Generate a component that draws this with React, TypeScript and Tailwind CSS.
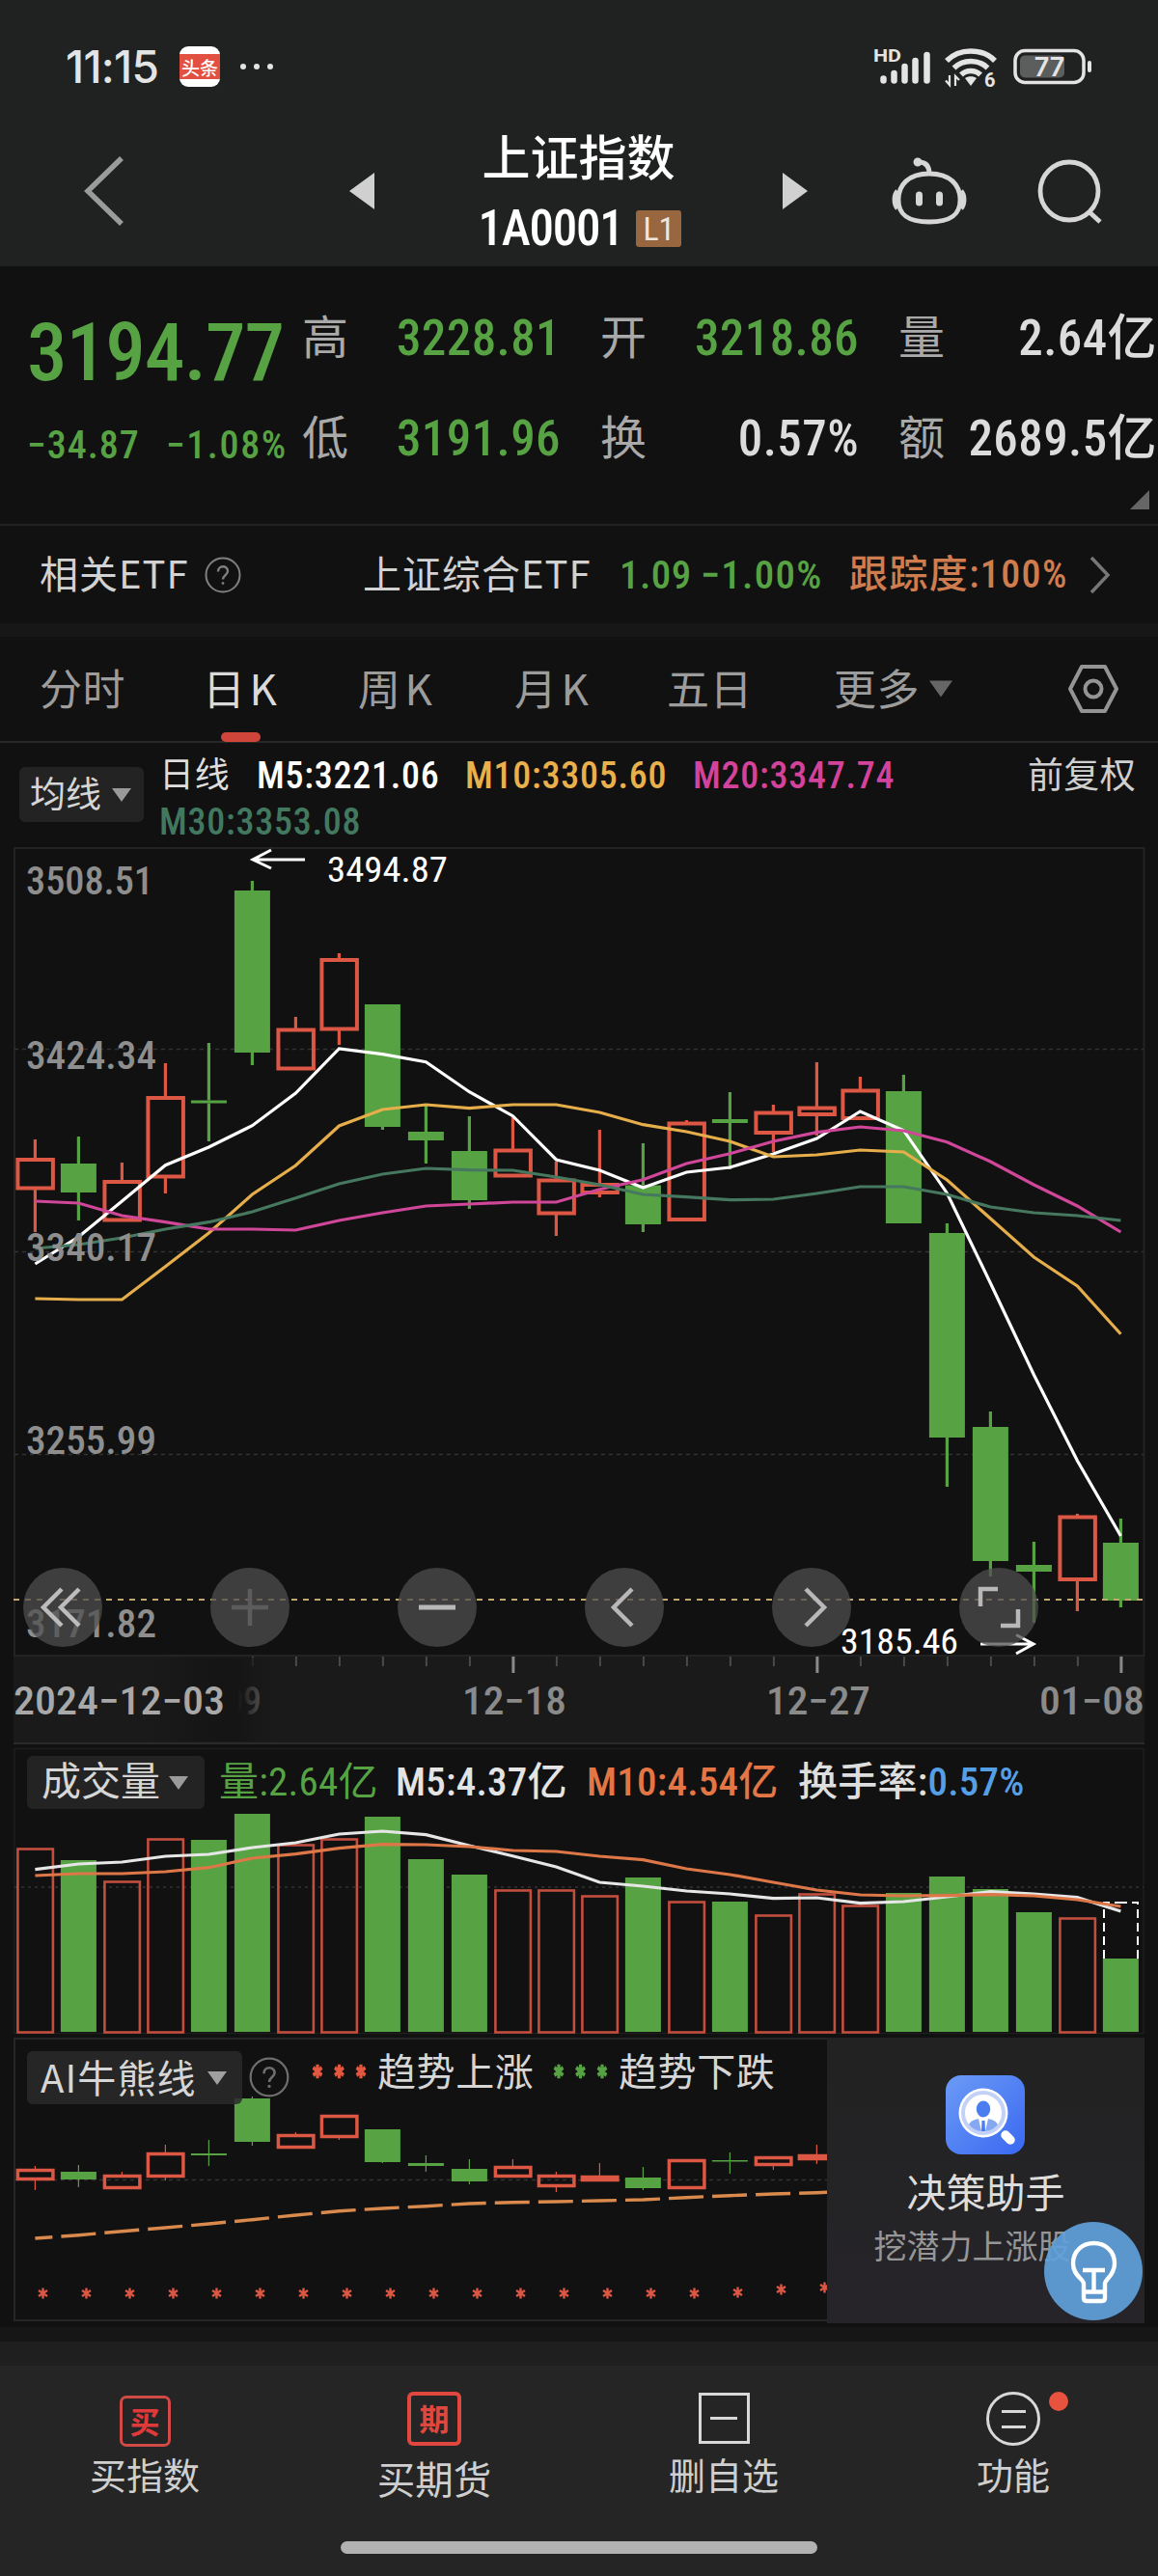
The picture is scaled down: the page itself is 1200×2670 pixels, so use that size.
import type { ReactNode } from "react";

type Candle = [up: 0 | 1, high: number, top: number, bottom: number, low: number];

const STEP = 45;
const FIRST = 36.4;
const cx = (i: number) => FIRST + i * STEP;
const linePoints = (ys: number[]) => ys.map((y, i) => `${cx(i)},${y}`).join(" ");

const candles: Candle[] = [
    [1, 1181, 1202, 1231.5, 1277],
    [0, 1178, 1206, 1236, 1265],
    [1, 1205, 1225, 1264.5, 1264.5],
    [1, 1102, 1138, 1219.5, 1237],
    [0, 1081, 1140.5, 1143.5, 1183],
    [0, 913, 923, 1091, 1104],
    [1, 1054, 1067.5, 1107.5, 1107.5],
    [1, 988, 995, 1066.5, 1083],
    [0, 1041, 1041, 1168, 1171],
    [0, 1144, 1173, 1182, 1206],
    [0, 1157, 1193, 1244, 1253],
    [1, 1157, 1192.5, 1218.5, 1218.5],
    [1, 1204, 1223.5, 1257.5, 1281],
    [1, 1171, 1228, 1236, 1241],
    [0, 1185, 1228.5, 1269, 1277],
    [1, 1161, 1164.5, 1264, 1264],
    [0, 1132, 1160, 1164, 1212],
    [1, 1145, 1153.5, 1174, 1194],
    [1, 1101, 1148.5, 1155, 1177],
    [1, 1116, 1130.5, 1159, 1159],
    [0, 1114, 1131, 1268, 1268],
    [0, 1268, 1278, 1490, 1541],
    [0, 1463, 1479, 1618, 1634],
    [0, 1598, 1622, 1629, 1682],
    [1, 1569, 1572.5, 1637, 1670],
    [0, 1574, 1599, 1659, 1666],
];

const ma5 = [1310, 1282, 1245, 1207.7, 1189, 1166.7, 1133, 1087, 1092.7, 1100.7, 1131.7, 1156.7, 1202, 1213, 1231, 1215, 1210, 1196, 1180, 1152, 1171.7, 1236.7, 1330, 1425, 1514, 1592];
const ma10 = [1346, 1347, 1347, 1312.7, 1278, 1238, 1208, 1167, 1150, 1145, 1148.7, 1145, 1145, 1153, 1165.7, 1173, 1183, 1199, 1197, 1192, 1194, 1223, 1263, 1303, 1333, 1382.7];
const ma20 = [1245, 1247, 1260, 1266.7, 1274, 1274, 1275, 1265, 1257, 1250, 1248, 1246, 1246, 1232.7, 1222.7, 1206, 1195.7, 1183, 1173.7, 1168, 1172, 1183.7, 1204, 1228, 1250, 1277];
const ma30 = [1294, 1290, 1283, 1274, 1266.7, 1256, 1241.7, 1227, 1217, 1211, 1212.7, 1213, 1220, 1228, 1238, 1240.7, 1243.7, 1243, 1237, 1230, 1230, 1238, 1251, 1257, 1260, 1265];

const volumeTops = [1915, 1928, 1949, 1905, 1907, 1880, 1911, 1905, 1883, 1927, 1943, 1958, 1958, 1964, 1946, 1970, 1971, 1984, 1962, 1974, 1962, 1945, 1958, 1982, 1987, 2030];
const volumeMa5 = [1937.7, 1932, 1930, 1924, 1922, 1915, 1910, 1901, 1898, 1901.7, 1913, 1923.7, 1935, 1951, 1955, 1960, 1963, 1967.7, 1967, 1972.7, 1971, 1966, 1960.7, 1963, 1966.7, 1981];
const volumeMa10 = [1944, 1942, 1942, 1940, 1935.7, 1926, 1921.7, 1915.7, 1911.7, 1912, 1914, 1918, 1919, 1924, 1927.7, 1937, 1943, 1951, 1959, 1964, 1965, 1964.7, 1963.7, 1965, 1969, 1976];

const aiCandles: Candle[] = [
    [1, 2245, 2249.5, 2258.5, 2270],
    [0, 2244, 2251, 2259, 2267],
    [1, 2251, 2255.5, 2267.5, 2267.5],
    [1, 2223, 2232.5, 2255.5, 2260],
    [0, 2218, 2232, 2234, 2245],
    [0, 2173, 2175, 2220, 2224],
    [1, 2210, 2213.5, 2225.5, 2225.5],
    [1, 2192, 2193.5, 2214.5, 2218],
    [0, 2207, 2207, 2241, 2242],
    [0, 2234, 2242, 2245, 2251],
    [0, 2238, 2248, 2261, 2264],
    [1, 2238, 2246.5, 2255.5, 2255.5],
    [1, 2251, 2255.5, 2265.5, 2272],
    [1, 2242, 2256.5, 2259.5, 2259.5],
    [0, 2246, 2257, 2268, 2270],
    [1, 2238, 2239.5, 2267.5, 2267.5],
    [0, 2231, 2239, 2240.5, 2253],
    [1, 2235, 2236.5, 2243.5, 2249],
    [1, 2223, 2234.5, 2237.5, 2243],
];
const aiTrend = [2320, 2316.7, 2312.7, 2309, 2305, 2300.7, 2296, 2291.7, 2289, 2286.7, 2284, 2282.7, 2282, 2281, 2280, 2277.7, 2275.7, 2274, 2272.7, 2271];
const aiStars = [...Array(16).fill(2377), 2376, 2373, 2371];

const NUM = "font-['Roboto_Condensed','Roboto','Noto_Sans_CJK_SC',sans-serif] font-stretch-condensed whitespace-nowrap";

function Candles({ data, wick, stroke }: { data: Candle[]; wick: number; stroke: number }) {
    return (
        <>
            {data.map(([up, high, top, bottom, low], i) => {
                const x = cx(i);
                const color = up ? "#dc5744" : "#57a344";
                return (
                    <g key={i}>
                        <path d={`M${x} ${high}V${top}M${x} ${bottom}V${low}`} stroke={color} strokeWidth={wick} />
                        {up ? (
                            <rect x={x - 18} y={top} width={36.5} height={bottom - top} fill="none" stroke={color} strokeWidth={stroke} />
                        ) : (
                            <rect x={x - 18.5} y={top} width={37} height={bottom - top} fill={color} />
                        )}
                    </g>
                );
            })}
        </>
    );
}

function Label({ x, y, w, size = 40, fill = "#8e8e8e", weight = 500, children }: {
    x: number; y: number; w: number; size?: number; fill?: string; weight?: number; children: string;
}) {
    return (
        <text x={x} y={y} textLength={w} lengthAdjust="spacingAndGlyphs" fontSize={size} fill={fill} fontWeight={weight} className={NUM}>
            {children}
        </text>
    );
}

function Caret({ className = "" }: { className?: string }) {
    return (
        <svg viewBox="0 0 20 14" className={"w-5 h-3.5 " + className}>
            <path d="M0 0H20L10 14Z" fill="currentColor" />
        </svg>
    );
}

function HelpIcon({ className }: { className: string }) {
    return (
        <svg viewBox="0 0 38 38" className={className} fill="none" stroke="currentColor" strokeWidth="2">
            <circle cx="19" cy="19" r="17.5" />
            <path d="M14 15.5c0-7 10-7 10-.5 0 4-5 4.200-5 8.500" strokeWidth="2.400" />
            <circle cx="19" cy="27.500" r="1" fill="currentColor" strokeWidth="1" />
        </svg>
    );
}

function StatusBar() {
    return (
        <div className="flex h-[138px] items-center pl-[68px] pr-[66px] text-[#e4e4e4]">
            <span className="w-[96px] text-[46px] font-medium tracking-[-0.015em] whitespace-nowrap font-['Inter',sans-serif]">11:15</span>
            <div className="ml-[22px] flex h-[42px] w-[42px] items-center justify-center overflow-hidden rounded-[9px] bg-white">
                <div className="flex h-[26px] w-full items-center justify-center bg-[#e25042] text-[19px] leading-none font-medium text-white">头条</div>
            </div>
            <div className="ml-[21px] flex gap-[8px]">
                <i className="h-1.5 w-1.5 rounded-full bg-current" />
                <i className="h-1.5 w-1.5 rounded-full bg-current" />
                <i className="h-1.5 w-1.5 rounded-full bg-current" />
            </div>
            <svg viewBox="904 44 230 50" className="ml-auto h-[50px] w-[230px]" fill="currentColor">
                <text x="905" y="64" fontSize="19" fontWeight="700" textLength="29" lengthAdjust="spacingAndGlyphs" className="font-['Roboto',sans-serif]">HD</text>
                <g stroke="currentColor" strokeWidth="6.500" strokeLinecap="round">
                    <path d="M915.500 81.500V83.500M926.500 76V83.500M937.500 69V83.500M948.500 63V83.500M960.500 57V83.500" />
                </g>
                <g fill="none" stroke="currentColor" strokeWidth="5.500">
                    <path d="M981 63C994 49.500 1018 49.500 1031 63" />
                    <path d="M988.500 70.500C998 61 1014 61 1023.500 70.500" />
                    <path d="M996 77.500C1001.500 72 1010.500 72 1016 77.500" />
                </g>
                <path d="M1000 81C1003 78.500 1009 78.500 1012 81L1006 89Z" />
                <path d="M984 78V88L980 83.500M990 89V79L994 83" fill="none" stroke="currentColor" strokeWidth="2.200" />
                <text x="1020" y="90" fontSize="20" fontWeight="700" className="font-['Roboto',sans-serif]">6</text>
                <rect x="1052" y="52.500" width="71" height="33" rx="10" fill="none" stroke="currentColor" strokeWidth="3.500" />
                <rect x="1057" y="57.500" width="46" height="23" rx="5" fill="#5c5d5d" />
                <rect x="1127" y="63" width="4" height="12" rx="2" />
                <text x="1087.500" y="78.500" fontSize="27" fontWeight="600" textAnchor="middle" className="font-['Inter',sans-serif]">77</text>
            </svg>
        </div>
    );
}

function NavBar() {
    return (
        <div className="flex h-[138px] items-center pb-[18px]">
            <svg viewBox="0 0 46 76" className="ml-[85px] h-[76px] w-[46px]" fill="none" stroke="#9b9b9b" strokeWidth="5.500">
                <path d="M41 4L6 38L41 72" />
            </svg>
            <svg viewBox="0 0 26 38" className="ml-[231px] h-[38px] w-[26px]" fill="#d0d0d0">
                <path d="M26 0V38L0 19Z" />
            </svg>
            <div className="flex w-[423px] flex-col items-center text-white">
                <div className="h-[62px] text-[50px] leading-[60px] font-medium">上证指数</div>
                <div className="mt-[15px] flex h-[60px] items-center gap-[14px] pl-[3px]">
                    <span className={NUM + " text-[51px] leading-none font-medium tracking-[-0.025em]"}>1A0001</span>
                    <span className={NUM + " flex h-[38px] w-[47px] items-center justify-center rounded-[3px] bg-[#98663f] text-[34px] leading-none text-[#efe6dc]"}>L1</span>
                </div>
            </div>
            <svg viewBox="0 0 26 38" className="h-[38px] w-[26px]" fill="#d0d0d0">
                <path d="M0 0V38L26 19Z" />
            </svg>
            <svg viewBox="922 158 82 76" className="ml-[85px] h-[76px] w-[82px]" fill="none" stroke="#d6d6d6" strokeWidth="4.800">
                <path d="M963 178C985 178 995 190 995 205C995 221 985 228 963 228C941 228 931 221 931 205C931 190 941 178 963 178Z" />
                <path d="M930 196C926 200 926 210 930 214M996 196C1000 200 1000 210 996 214" />
                <path d="M963 178C963 170 959 166 952 166" />
                <circle cx="951" cy="166" r="3.500" fill="#d6d6d6" strokeWidth="2" />
                <path d="M952.500 200V208M973.500 200V208" strokeWidth="7" strokeLinecap="round" />
            </svg>
            <svg viewBox="1072 160 74 74" className="ml-[68px] h-[74px] w-[74px]" fill="none" stroke="#d6d6d6" strokeWidth="4.800">
                <circle cx="1108" cy="197" r="30" />
                <path d="M1128 218L1140 229" />
            </svg>
        </div>
    );
}

function QuoteCell({ label, value, className = "" }: { label: string; value: string; className?: string }) {
    return (
        <div className="flex items-center justify-between">
            <span className="pb-[5px] text-[48px] leading-none text-[#a9a9a9]">{label}</span>
            <span className={NUM + " pt-[4px] text-[51px] leading-none font-medium tracking-[0.008em] " + className}>{value}</span>
        </div>
    );
}

function Quote() {
    return (
        <div className="relative flex h-[267px] bg-[#111111] pt-[20px]">
            <div className="w-[313px] shrink-0 pl-[28px] text-[#57a344]">
                <div className={NUM + " mt-[28px] h-[83px] text-[83px] leading-[83px] font-medium tracking-[-0.01em]"}>3194.77</div>
                <div className={NUM + " mt-[35px] flex text-[40px] leading-none font-medium tracking-[0.025em]"}>
                    <span className="w-[144px]">−34.87</span>
                    <span className="tracking-[0.04em]">−1.08%</span>
                </div>
            </div>
            <div className="grid h-[208px] flex-1 grid-cols-[268px_268px_268px] grid-rows-2 gap-x-[41px]">
                <QuoteCell label="高" value="3228.81" className="text-[#57a344]" />
                <QuoteCell label="开" value="3218.86" className="text-[#57a344]" />
                <QuoteCell label="量" value="2.64亿" className="text-[#dcdcdc]" />
                <QuoteCell label="低" value="3191.96" className="text-[#57a344]" />
                <QuoteCell label="换" value="0.57%" className="text-[#dcdcdc]" />
                <QuoteCell label="额" value="2689.5亿" className="text-[#dcdcdc]" />
            </div>
            <svg viewBox="0 0 20 20" className="absolute right-[9px] bottom-[15px] h-5 w-5" fill="#666666">
                <path d="M20 0V20H0Z" />
            </svg>
        </div>
    );
}

function EtfRow() {
    return (
        <div className="flex h-[103px] items-center border-t-2 border-[#222222] bg-[#111111] text-[40px] text-[#d2d2d2]">
            <span className="w-[171px] pb-[6px] pl-[41px] tracking-[0.025em] whitespace-nowrap">相关ETF</span>
            <HelpIcon className="ml-[41px] h-[38px] w-[38px] text-[#808080]" />
            <span className="ml-[126px] w-[266px] pb-[6px] tracking-[0.025em] whitespace-nowrap">上证综合ETF</span>
            <span className={NUM + " w-[84px] pt-[2px] text-[41px] font-medium tracking-[0.01em] text-[#57a344]"}>1.09</span>
            <span className={NUM + " w-[154px] pt-[2px] text-[41px] font-medium tracking-[0.03em] text-[#57a344]"}>−1.00%</span>
            <span className={NUM + " w-[248px] text-[40px] font-medium tracking-[0.035em] text-[#cf7c4e]"}>跟踪度:100%</span>
            <svg viewBox="0 0 24 40" className="h-10 w-6" fill="none" stroke="#777777" strokeWidth="3.500">
                <path d="M3 2L20 20L3 38" />
            </svg>
        </div>
    );
}

function Tabs() {
    return (
        <div className="flex h-[110px] items-center border-b-2 border-[#282828] bg-[#111111] pl-[41px] text-[44px] tracking-[0.01em] text-[#9c9c9c]">
            <span className="w-[169px] pb-[4px]">分时</span>
            <div className="relative flex h-full w-[161px] items-center pb-[4px] tracking-[0.1em] text-[#dadada]">
                日K
                <i className="absolute bottom-[-1px] left-[19px] h-[10px] w-[41px] rounded-full bg-[#d0453a]" />
            </div>
            <span className="w-[162px] pb-[4px] tracking-[0.1em]">周K</span>
            <span className="w-[158px] pb-[4px] tracking-[0.1em]">月K</span>
            <span className="w-[173px] pb-[4px]">五日</span>
            <span className="pb-[4px]">更多</span>
            <Caret className="ml-[10px] h-[20px] w-[24px] text-[#666666]" />
            <svg viewBox="0 0 54 52" className="ml-[119px] h-[52px] w-[54px]" fill="none" stroke="#949494" strokeWidth="4">
                <path d="M15 3H39L51 26L39 49H15L3 26Z" strokeLinejoin="round" />
                <circle cx="27" cy="26" r="8.500" />
            </svg>
        </div>
    );
}

function MaLegend() {
    return (
        <div className="flex h-[104px] bg-[#111111] pl-[20px]">
            <div className="mt-[25px] flex h-[57px] w-[129px] items-center rounded-[6px] bg-[#232323] pl-[11px] text-[37px] text-[#d6d6d6]">
                <span className="pb-[3px]">均线</span>
                <Caret className="ml-[11px] text-[#9a9a9a]" />
            </div>
            <div className={NUM + " ml-[16px] w-[801px] text-[38px] font-medium tracking-[0.02em]"}>
                <div className="mt-[10px] flex h-[48px] items-center">
                    <span className="w-[101px] text-[36px] font-normal text-[#dedede]">日线</span>
                    <span className="w-[216px] text-white">M5:3221.06</span>
                    <span className="w-[236px] text-[#e9b04b]">M10:3305.60</span>
                    <span className="text-[#d4439b]">M20:3347.74</span>
                </div>
                <div className="flex h-[48px] items-center text-[#41785f]">M30:3353.08</div>
            </div>
            <div className="mt-[8px] ml-[99px] flex h-[48px] items-center text-[37px] tracking-[0.01em] whitespace-nowrap text-[#d0d0d0]">前复权</div>
        </div>
    );
}

const controls: [number, string, ReactNode][] = [
    [65, "#bcbcbc", <path d="M40 22L21 41L40 60M58 22L39 41L58 60" />],
    [259, "#5c5c5c", <path d="M41 22V60M22 41H60" />],
    [453, "#b8b8b8", <path d="M22 41H60" strokeWidth="5" />],
    [647, "#b8b8b8", <path d="M49 22L30 41L49 60" />],
    [841, "#b8b8b8", <path d="M35 22L54 41L35 60" />],
    [1035, "#b8b8b8", <path d="M22 40V22H40M61 43V60H43" />],
];

function PriceChart() {
    return (
        <div className="relative h-[934px]">
            <svg viewBox="0 874 1200 934" className="block h-[934px] w-[1200px]">
                <defs>
                    <linearGradient id="fade">
                        <stop offset="0" stopColor="#151515" stopOpacity="0" />
                        <stop offset=".5" stopColor="#151515" />
                        <stop offset=".64" stopColor="#151515" />
                        <stop offset="1" stopColor="#1a1a1a" stopOpacity="0" />
                    </linearGradient>
                </defs>
                <rect x="14" y="1717" width="1172" height="89" fill="#1a1a1a" />
                <rect x="15" y="879" width="1170.500" height="837" fill="none" stroke="#232323" strokeWidth="2" />
                <path d="M15 1087.500H1185M15 1297.500H1185M15 1507.500H1185" stroke="#333333" strokeWidth="1.500" strokeDasharray="4 4" />
                <Candles data={candles} wick={3.200} stroke={4} />
                <g fill="none" strokeWidth="3.200">
                    <polyline points={linePoints(ma5)} stroke="#ffffff" />
                    <polyline points={linePoints(ma10)} stroke="#e6ae4b" />
                    <polyline points={linePoints(ma20)} stroke="#d0479a" />
                    <polyline points={linePoints(ma30)} stroke="#46785f" />
                </g>
                <path d="M14 1658H1185" stroke="#c0a870" strokeWidth="2" strokeDasharray="6 6" />
                <Label x={27} y={927} w={132}>3508.51</Label>
                <Label x={27} y={1108} w={135}>3424.34</Label>
                <Label x={27} y={1307} w={135}>3340.17</Label>
                <Label x={27} y={1507} w={135}>3255.99</Label>
                <Label x={27} y={1697} w={135}>3171.82</Label>
                <Label x={339} y={913.5} w={125} size={36} fill="#ffffff" weight={400}>3494.87</Label>
                <Label x={871} y={1714} w={122} size={36} fill="#ffffff" weight={400}>3185.46</Label>
                <g fill="none" stroke="#ffffff" strokeWidth="3">
                    <path d="M316 891H262M281 881L262 891L281 900" />
                    <path d="M1016 1704H1070M1053 1694.500L1071 1704L1053 1714" />
                </g>
                {candles.map((_, i) =>
                    i < 5 ? null : (i - 11) % 7 === 0 ? (
                        <path key={i} d={`M${cx(i) + 0.5} 1717V1734`} stroke="#8a8a8a" strokeWidth="3" />
                    ) : (
                        <path key={i} d={`M${cx(i) + 0.5} 1717V1727`} stroke="#4a4a4a" strokeWidth="2" />
                    )
                )}
                <Label x={233} y={1777} w={38} fill="#8a8a8a">09</Label>
                <rect x="150" y="1718" width="150" height="87" fill="url(#fade)" />
                <Label x={14} y={1777} w={219} fill="#a8a8a8">2024−12−03</Label>
                <Label x={479} y={1777} w={108} fill="#8a8a8a">12−18</Label>
                <Label x={794} y={1777} w={108} fill="#8a8a8a">12−27</Label>
                <Label x={1077} y={1777} w={109} fill="#8a8a8a">01−08</Label>
                <path d="M14 1807H1186" stroke="#2a2a2a" strokeWidth="2" />
            </svg>
            <div className="absolute top-[751px] left-[24px] flex gap-[112px]">
                {controls.map(([x, color, icon]) => (
                    <svg key={x} viewBox="0 0 82 82" className="h-[82px] w-[82px]" fill="none" stroke={color} strokeWidth="4.500">
                        <circle cx="41" cy="41" r="41" fill="#4e4e4e" fillOpacity=".74" stroke="none" />
                        {icon}
                    </svg>
                ))}
            </div>
        </div>
    );
}

function VolumeChart() {
    return (
        <div className="relative h-[304px]">
            <svg viewBox="0 1808 1200 304" className="block h-[304px] w-[1200px]">
                <rect x="15" y="1812.500" width="1170" height="295" fill="none" stroke="#1e1e1e" strokeWidth="1.500" />
                <path d="M15 1956H1185" stroke="#333333" strokeWidth="1.500" strokeDasharray="3 4" />
                {volumeTops.map((top, i) =>
                    candles[i][0] ? (
                        <rect key={i} x={cx(i) - 18} y={top + 1.500} width={36.500} height={2105 - top} fill="none" stroke="#c24e3e" strokeWidth="2.600" />
                    ) : (
                        <rect key={i} x={cx(i) - 18.5} y={top} width={37} height={2106 - top} fill="#57a344" />
                    )
                )}
                <path d="M1144 2030V1971M1179 2030V1971" stroke="#ffffff" strokeWidth="2" strokeDasharray="9 5" />
                <path d="M1143 1972H1150M1155 1972H1168M1173 1972H1180" stroke="#ffffff" strokeWidth="2" />
                <g fill="none" strokeWidth="3.200">
                    <polyline points={linePoints(volumeMa5)} stroke="#e6e6e6" />
                    <polyline points={linePoints(volumeMa10)} stroke="#dd7748" />
                </g>
            </svg>
            <div className={NUM + " absolute top-[12px] left-[28px] flex text-[41px] leading-none"}>
                <div className="flex h-[55px] w-[184px] items-center rounded-[6px] bg-[#232323] pl-[15px] text-[#d6d6d6]">
                    成交量
                    <Caret className="ml-[9px] text-[#9a9a9a]" />
                </div>
                <div className="ml-[15px] flex h-[55px] items-center font-medium tracking-[0.006em]">
                    <span className="w-[183px] font-normal text-[#57a344]">量:2.64亿</span>
                    <span className="w-[198px] text-[#e4e4e4]">M5:4.37亿</span>
                    <span className="w-[219px] text-[#e47645]">M10:4.54亿</span>
                    <span className="text-[#dedede]">换手率:<span className="text-[#559fe6]">0.57%</span></span>
                </div>
            </div>
        </div>
    );
}

function Star({ x, y, color, width = 2.4 }: { x: number; y: number; color: string; width?: number }) {
    return <path d={`M${x} ${y - 5.500}V${y + 5.500}M${x - 4.500} ${y - 3}L${x + 4.500} ${y + 3}M${x - 4.500} ${y + 3}L${x + 4.500} ${y - 3}`} stroke={color} strokeWidth={width} />;
}

function Stars({ color }: { color: string }) {
    return (
        <svg viewBox="0 0 60 16" className="h-4 w-[60px]">
            <g transform="translate(0 -2.400) scale(1 1.300)">
                <Star x={7} y={8} color={color} width={3.2} />
                <Star x={29.500} y={8} color={color} width={3.2} />
                <Star x={52} y={8} color={color} width={3.2} />
            </g>
        </svg>
    );
}

function PromoCard() {
    return (
        <div className="absolute top-0 left-[857px] flex h-[296px] w-[329px] flex-col items-center bg-linear-to-b from-[#222222] to-[#262429]">
            <svg viewBox="0 0 82 82" className="mt-[39px] mr-[2px] h-[82px] w-[82px]">
                <defs>
                    <linearGradient id="promo" x1="0" y1="0" x2="1" y2="1">
                        <stop offset="0" stopColor="#6b9bf6" />
                        <stop offset="1" stopColor="#3a68f2" />
                    </linearGradient>
                </defs>
                <rect width="82" height="82" rx="16" fill="url(#promo)" />
                <circle cx="39" cy="39" r="25.500" fill="#ffffff" />
                <circle cx="39" cy="39" r="21" fill="#ffffff" stroke="#c3d1f6" strokeWidth="4" />
                <ellipse cx="39" cy="35" rx="7.200" ry="8.500" fill="#4a7ef0" />
                <path d="M24 51C26 47 30 46 34 45L37 58C32 58 27 55 24 51ZM54 51C52 47 48 46 44 45L41 58C46 58 51 55 54 51Z" fill="#86a8f2" />
                <path d="M37.500 47H40.500L41 58H37Z" fill="#4a7ef0" />
                <path d="M62 62L67 67" stroke="#ffffff" strokeWidth="9.500" strokeLinecap="round" />
            </svg>
            <div className="mt-[15px] text-[41px] leading-[44px] whitespace-nowrap text-[#dddddd]">决策助手</div>
            <div className="mt-[15px] mr-[28px] text-[34px] leading-[40px] whitespace-nowrap text-[#969696]">挖潜力上涨股</div>
        </div>
    );
}

function AiPanel() {
    return (
        <div className="relative h-[300px]">
            <svg viewBox="0 2112 1200 300" className="block h-[300px] w-[1200px]">
                <defs>
                    <clipPath id="aiClip">
                        <rect x="0" y="2112" width="857" height="300" />
                    </clipPath>
                </defs>
                <rect x="15" y="2113" width="1170" height="292" fill="none" stroke="#262626" strokeWidth="2" />
                <g clipPath="url(#aiClip)">
                    <path d="M15 2259.500H857" stroke="#333333" strokeWidth="1.500" strokeDasharray="4 4" />
                    <Candles data={aiCandles} wick={1.200} stroke={3.500} />
                    <polyline points={linePoints(aiTrend)} fill="none" stroke="#d98a4c" strokeWidth="3.400" strokeDasharray="36 9.080" strokeDashoffset="18" />
                    {aiStars.map((y, i) => (
                        <Star key={i} x={44.5 + i * STEP} y={y} color="#dc5744" />
                    ))}
                </g>
            </svg>
            <div className="absolute top-[14px] left-[28px] flex text-[40px] leading-none whitespace-nowrap text-[#d6d6d6]">
                <div className="flex h-[55px] w-[223px] items-center rounded-[6px] bg-[#2a2a2a]/85 pl-[14px] tracking-[0.028em]">
                    <span className="pb-[3px]">AI牛熊线</span>
                    <Caret className="ml-[11px] text-[#a0a0a0]" />
                </div>
                <HelpIcon className="mt-[6px] ml-[7px] h-[42px] w-[42px] text-[#6e6e6e]" />
                <div className="flex h-[44px] items-center">
                    <span className="ml-[22px] pb-[2px]"><Stars color="#e3563f" /></span>
                    <span className="ml-[9px] w-[181px] pb-[6px] tracking-[0.015em]">趋势上涨</span>
                    <span className="pb-[2px]"><Stars color="#57a344" /></span>
                    <span className="ml-[9px] pb-[6px] tracking-[0.015em]">趋势下跌</span>
                </div>
            </div>
            <PromoCard />
            <svg viewBox="0 0 102 102" className="absolute top-[191px] left-[1082px] h-[102px] w-[102px]" fill="none" stroke="#ffffff" strokeWidth="4.400">
                <circle cx="51" cy="51" r="51" fill="#5fa1da" fillOpacity=".92" stroke="none" />
                <path d="M41 64C41 59 30 56 30 43C30 30 40 22 51.500 22C63 22 73 30 73 43C73 56 63 59 63 64V79C63 81 62 82 60 82H44C42 82 41 81 41 79Z" />
                <path d="M40 50H63M51.500 50V72M41 72.500H63" />
            </svg>
        </div>
    );
}

function BottomItem({ label, className = "", children }: { label: string; className?: string; children: ReactNode }) {
    return (
        <div className={"flex flex-1 flex-col items-center text-[38px] leading-[50px] text-[#cfcfcf] " + className}>
            {children}
            {label}
        </div>
    );
}

function BottomNav() {
    return (
        <div className="flex h-[218px] flex-col bg-[#252525]">
            <div className="flex h-[182px]">
                <BottomItem label="买指数">
                    <div className="mt-[31px] mb-[3px] flex h-[53px] w-[53px] items-center justify-center rounded-[7px] border-3 border-[#d24a45] pb-[3px] text-[31px] leading-none font-bold text-[#e0393a]">买</div>
                </BottomItem>
                <BottomItem label="买期货" className="text-[39.500px]">
                    <div className="mt-[27px] mb-[8px] flex h-[56px] w-[56px] items-center justify-center rounded-[6px] border-4 border-[#e0483f] pb-[3px] text-[31px] leading-none font-bold text-[#e0483f]">期</div>
                </BottomItem>
                <BottomItem label="删自选">
                    <div className="mt-[28px] mb-[6px] flex h-[53px] w-[53px] items-center justify-center border-3 border-[#d8d8d8]">
                        <i className="h-[3px] w-[28px] bg-[#d8d8d8]" />
                    </div>
                </BottomItem>
                <BottomItem label="功能">
                    <div className="relative mt-[27px] mb-[4px] flex h-[56px] w-[56px] flex-col items-center justify-center gap-[13px] rounded-full border-3 border-[#d8d8d8]">
                        <i className="h-[3px] w-[25px] bg-[#d8d8d8]" />
                        <i className="h-[3px] w-[25px] bg-[#d8d8d8]" />
                        <i className="absolute top-[-3px] left-[62px] h-5 w-5 rounded-full bg-[#e8533f]" />
                    </div>
                </BottomItem>
            </div>
            <div className="mx-auto h-[13px] w-[494px] rounded-full bg-[#b2b2b2]" />
        </div>
    );
}

export default function App() {
    return (
        <div className="h-[2670px] w-[1200px] overflow-hidden bg-[#111111] font-['Noto_Sans_CJK_SC',sans-serif]">
            <header className="h-[276px] bg-[#202221]">
                <StatusBar />
                <NavBar />
            </header>
            <Quote />
            <EtfRow />
            <div className="h-[14px] bg-[#171717]" />
            <Tabs />
            <MaLegend />
            <PriceChart />
            <VolumeChart />
            <AiPanel />
            <div className="h-[15px] bg-[#161616]" />
            <div className="h-[25px] bg-[#1f1f1f]" />
            <BottomNav />
        </div>
    );
}
